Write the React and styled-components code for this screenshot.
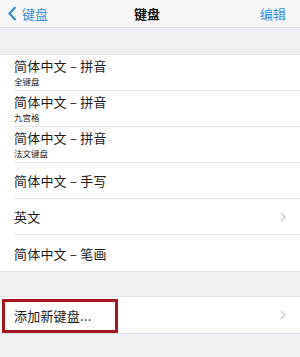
import React from "react";
import styled, { createGlobalStyle } from "styled-components";

const Global = createGlobalStyle`
  html, body { margin: 0; padding: 0; background: #efeff4; }
  body { font-family: "Noto Sans CJK SC", "Noto Sans", sans-serif; }
`;

const Screen = styled.div`
  width: 300px;
  height: 357px;
  background: #efeff4;
  overflow: hidden;
  display: flex;
  flex-direction: column;
`;

const NavBar = styled.div`
  height: 28px;
  background: #f7f7f8;
  border-bottom: 1px solid #dcdce0;
  display: grid;
  grid-template-columns: 1fr auto 1fr;
  align-items: center;
  padding: 0 14px 0 8px;
  box-sizing: border-box;
  flex: none;
`;

const Back = styled.div`
  display: flex;
  align-items: center;
  gap: 5px;
  color: #3a8fd9;
  font-size: 13px;
`;

const Title = styled.div`
  font-size: 13px;
  font-weight: 700;
  color: #111;
`;

const Edit = styled.div`
  justify-self: end;
  color: #3a8fd9;
  font-size: 13px;
`;

const Gap = styled.div`
  height: ${(p) => p.h}px;
  flex: none;
`;

const Group = styled.div`
  background: #fff;
  border-top: ${(p) => (p.top ? "1px solid #e2e2e6" : "none")};
  border-bottom: 1px solid #e2e2e6;
  display: flex;
  flex-direction: column;
  flex: none;
`;

const Row = styled.div`
  position: relative;
  height: 36px;
  margin-left: 14px;
  padding-right: 14px;
  display: flex;
  align-items: center;
  justify-content: space-between;
  border-bottom: ${(p) => (p.last ? "none" : "1px solid #e4e4e8")};
  box-sizing: border-box;
`;

const Labels = styled.div`
  display: flex;
  flex-direction: column;
  justify-content: center;
`;

const Main = styled.div`
  font-size: 13px;
  color: #1c1c1c;
  line-height: 19px;
  letter-spacing: 0.2px;
`;

const Sub = styled.div`
  font-size: 8.5px;
  color: #222;
  line-height: 13px;
  margin-bottom: 1px;
`;

const Chevron = styled.svg`
  width: 6px;
  height: 10px;
  flex: none;
`;

const Highlight = styled.div`
  position: absolute;
  left: -12px;
  top: 2px;
  width: 116px;
  height: 34px;
  border: 3px solid #a3161c;
  box-sizing: border-box;
  pointer-events: none;
`;

const ChevronRight = () => (
  <Chevron viewBox="0 0 6 10">
    <path d="M1 1 L5 5 L1 9" fill="none" stroke="#c7c7cc" strokeWidth="1.4" />
  </Chevron>
);

const rows = [
  { main: "简体中文 – 拼音", sub: "全键盘" },
  { main: "简体中文 – 拼音", sub: "九宫格" },
  { main: "简体中文 – 拼音", sub: "法文键盘" },
  { main: "简体中文 – 手写" },
  { main: "英文", chevron: true },
  { main: "简体中文 – 笔画" },
];

export default function App() {
  return (
    <Screen>
      <Global />
      <NavBar>
        <Back>
          <svg width="9" height="15" viewBox="0 0 9 15">
            <path d="M7.5 1 L1.5 7.5 L7.5 14" fill="none" stroke="#3a8fd9" strokeWidth="2.2" />
          </svg>
          <span>键盘</span>
        </Back>
        <Title>键盘</Title>
        <Edit>编辑</Edit>
      </NavBar>
      <Gap h={26} />
      <Group top>
        {rows.map((r, i) => (
          <Row key={i} last={i === rows.length - 1}>
            <Labels>
              <Main>{r.main}</Main>
              {r.sub && <Sub>{r.sub}</Sub>}
            </Labels>
            {r.chevron && <ChevronRight />}
          </Row>
        ))}
      </Group>
      <Gap h={24} />
      <Group top>
        <Row last>
          <Labels>
            <Main>添加新键盘...</Main>
          </Labels>
          <ChevronRight />
          <Highlight />
        </Row>
      </Group>
    </Screen>
  );
}
